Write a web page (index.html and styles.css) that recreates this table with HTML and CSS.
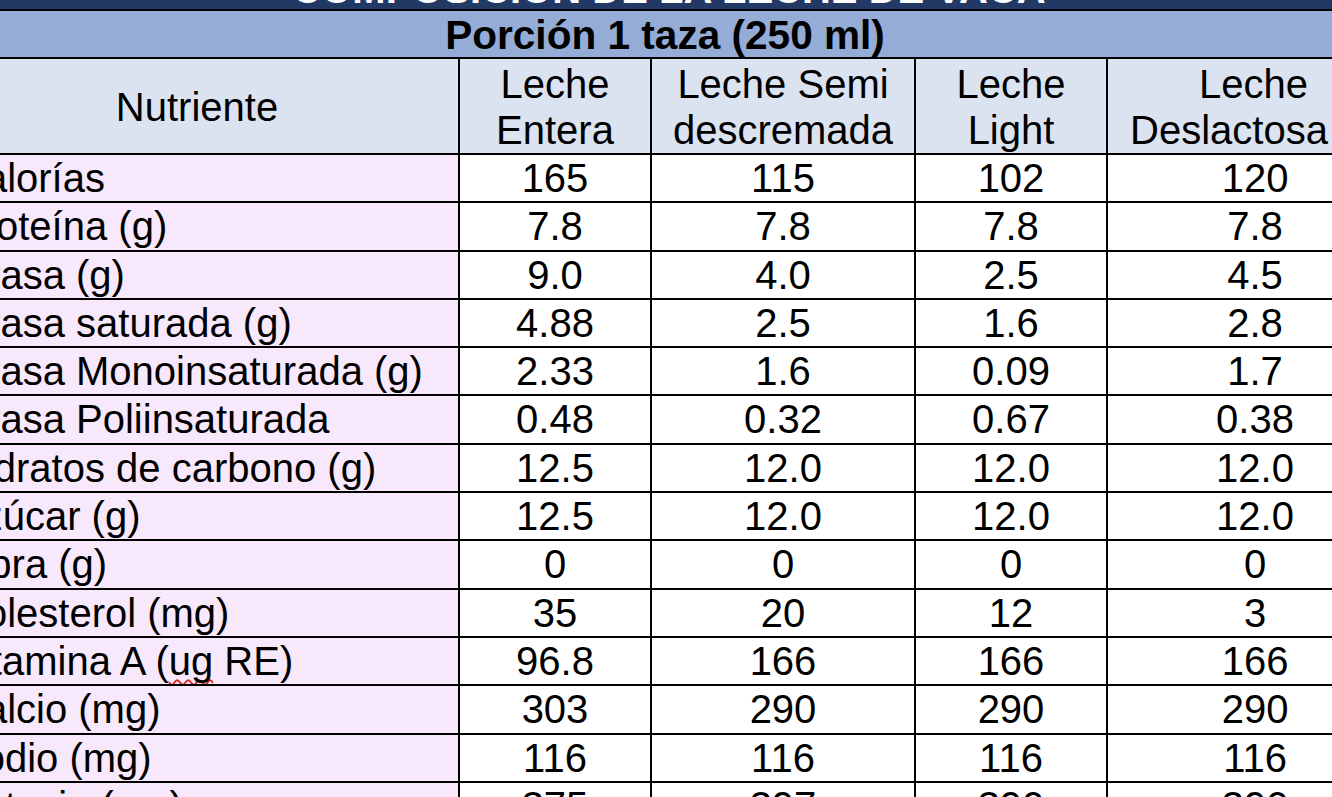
FILE: index.html
```html
<!DOCTYPE html>
<html lang="es">
<head>
<meta charset="utf-8">
<title>Composición de la leche de vaca</title>
<link rel="stylesheet" href="styles.css">
</head>
<body>
<div class="sheet">
  <table class="milk">
    <colgroup>
      <col class="c-name">
      <col class="c-a">
      <col class="c-b">
      <col class="c-c">
      <col class="c-d">
    </colgroup>
    <thead>
      <tr class="r-title"><th colspan="5">COMPOSICIÓN DE LA LECHE DE VACA</th></tr>
      <tr class="r-portion"><th colspan="5">Porción 1 taza (250 ml)</th></tr>
      <tr class="r-head">
        <th class="h-name">Nutriente</th>
        <th>Leche<br>Entera</th>
        <th>Leche Semi<br>descremada</th>
        <th>Leche<br>Light</th>
        <th class="h-last"><span class="w1">Leche</span><span class="w2">Deslactosa</span></th>
      </tr>
    </thead>
    <tbody>
      <tr><td class="name">Calorías</td><td>165</td><td>115</td><td>102</td><td>120</td></tr>
      <tr><td class="name">Proteína (g)</td><td>7.8</td><td>7.8</td><td>7.8</td><td>7.8</td></tr>
      <tr><td class="name">Grasa (g)</td><td>9.0</td><td>4.0</td><td>2.5</td><td>4.5</td></tr>
      <tr><td class="name">Grasa saturada (g)</td><td>4.88</td><td>2.5</td><td>1.6</td><td>2.8</td></tr>
      <tr><td class="name">Grasa Monoinsaturada (g)</td><td>2.33</td><td>1.6</td><td>0.09</td><td>1.7</td></tr>
      <tr><td class="name">Grasa Poliinsaturada</td><td>0.48</td><td>0.32</td><td>0.67</td><td>0.38</td></tr>
      <tr><td class="name">Hidratos de carbono (g)</td><td>12.5</td><td>12.0</td><td>12.0</td><td>12.0</td></tr>
      <tr><td class="name">Azúcar (g)</td><td>12.5</td><td>12.0</td><td>12.0</td><td>12.0</td></tr>
      <tr><td class="name">Fibra (g)</td><td>0</td><td>0</td><td>0</td><td>0</td></tr>
      <tr><td class="name">Colesterol (mg)</td><td>35</td><td>20</td><td>12</td><td>3</td></tr>
      <tr><td class="name">Vitamina A (<span class="spell">ug</span> RE)</td><td>96.8</td><td>166</td><td>166</td><td>166</td></tr>
      <tr><td class="name">Calcio (mg)</td><td>303</td><td>290</td><td>290</td><td>290</td></tr>
      <tr><td class="name">Sodio (mg)</td><td>116</td><td>116</td><td>116</td><td>116</td></tr>
      <tr><td class="name">Potasio (mg)</td><td>375</td><td>397</td><td>390</td><td>390</td></tr>
    </tbody>
  </table>
</div>
</body>
</html>
```
FILE: styles.css
```css
html, body {
  margin: 0;
  padding: 0;
  background: #ffffff;
}

body {
  width: 1332px;
  height: 797px;
  overflow: hidden;
}

.sheet {
  width: 1332px;
  height: 797px;
  overflow: hidden;
}

.milk {
  table-layout: fixed;
  border-collapse: separate;
  border-spacing: 0;
  width: 1466px;
  margin-left: -64px;
  margin-top: -31px;
  font-family: "Liberation Sans", Arial, sans-serif;
  font-size: 40px;
  color: #000000;
}

.c-name { width: 524px; }
.c-a { width: 192px; }
.c-b { width: 264px; }
.c-c { width: 192px; }
.c-d { width: 294px; }

.milk th,
.milk td {
  padding: 0;
  text-align: center;
  white-space: nowrap;
  overflow: hidden;
  border-bottom: 2px solid #000000;
}

.r-title th {
  background: #233965;
  color: #ffffff;
  font-weight: bold;
  line-height: 40px;
  height: 40px;
  vertical-align: bottom;
}

.r-portion th {
  background: #94acd6;
  font-weight: bold;
  font-size: 40.6px;
  line-height: 43px;
  padding-top: 3px;
  padding-right: 8px;
}

.r-head th {
  background: #dbe3f1;
  font-weight: normal;
  line-height: 46px;
  padding-top: 2px;
  vertical-align: middle;
  border-right: 2px solid #000000;
}

.r-head .h-last {
  border-right: none;
  text-align: left;
}

.h-last .w1,
.h-last .w2 {
  display: block;
}

.h-last .w1 {
  padding-left: 91px;
}

.h-last .w2 {
  padding-left: 22px;
}

.milk tbody td {
  background: #ffffff;
  line-height: 46.3px;
  border-right: 2px solid #000000;
}

.milk tbody td:last-child {
  border-right: none;
}

.milk tbody td.name {
  background: #f7e9fb;
  text-align: left;
  padding-left: 20px;
}

.spell {
  text-decoration: underline wavy #e0261d;
  text-decoration-thickness: 2px;
  text-decoration-skip-ink: none;
  text-underline-offset: 4px;
}
```
